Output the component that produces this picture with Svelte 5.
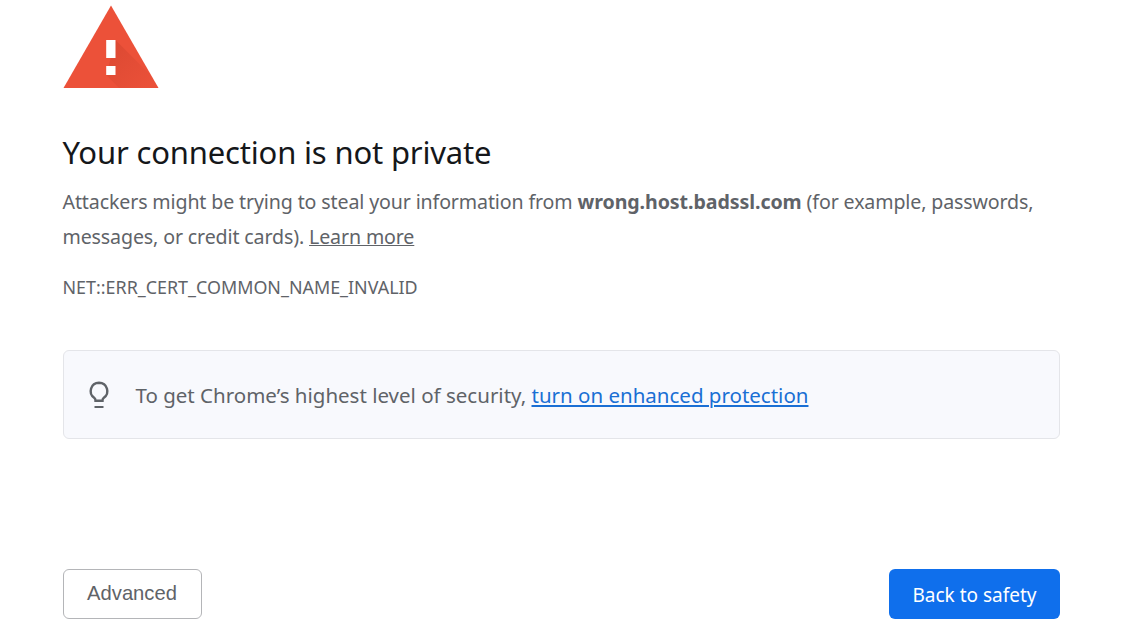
<script>
	const host = 'wrong.host.badssl.com';
	const errorCode = 'NET::ERR_CERT_COMMON_NAME_INVALID';
</script>

<main class="page">
	<svg class="warning" viewBox="0 0 96 84" width="96" height="84" aria-hidden="true">
		<defs>
			<linearGradient id="fold" x1="0.1" y1="0.1" x2="0.9" y2="0.9">
				<stop offset="0" stop-color="#c9402b" stop-opacity="0.45" />
				<stop offset="1" stop-color="#c9402b" stop-opacity="0.04" />
			</linearGradient>
		</defs>
		<polygon points="48,0.5 95.5,83 0.5,83" fill="#ec5139" />
		<polygon points="52.5,35 88.5,71 95.5,83 56,83 43.2,70" fill="url(#fold)" />
		<rect x="43.2" y="35" width="9.3" height="18" fill="#fff" />
		<rect x="43.2" y="61" width="9.3" height="9" fill="#fff" />
	</svg>

	<h1>Your connection is not private</h1>
	<p class="message">
		Attackers might be trying to steal your information from <strong>{host}</strong> (for example, passwords,
		messages, or credit cards). <a href="#learn" class="learn">Learn more</a>
	</p>
	<p class="code">{errorCode}</p>

	<div class="promo">
		<svg class="bulb" viewBox="0 0 24 28" width="24" height="28" aria-hidden="true">
			<path
				d="M12 1.8a8.3 8.3 0 0 0-4.6 15.2c.9.6 1.1 1.4 1.1 2.8h7c0-1.4.2-2.2 1.1-2.8A8.3 8.3 0 0 0 12 1.8Z"
				fill="none"
				stroke="#5f6368"
				stroke-width="2.4"
			/>
			<path d="M7.5 26h9" stroke="#5f6368" stroke-width="2" />
		</svg>
		<span>To get Chrome’s highest level of security, <a href="#protect">turn on enhanced protection</a></span>
	</div>

	<div class="actions">
		<button class="advanced" type="button">Advanced</button>
		<button class="back" type="button">Back to safety</button>
	</div>
</main>

<style>
	:global(body) {
		background: #fff;
	}

	.page {
		box-sizing: border-box;
		width: 1130px;
		height: 636px;
		padding: 5px 70px 0 62.5px;
		display: flex;
		flex-direction: column;
		font-family: 'Noto Sans', 'Open Sans', sans-serif;
		color: #5f6368;
		overflow: hidden;
	}

	.warning {
		display: block;
		flex: none;
	}

	h1 {
		margin: 41px 0 0;
		font-size: 31px;
		line-height: 44px;
		font-weight: 400;
		letter-spacing: -0.17px;
		color: #15171a;
	}

	.message {
		margin: 10px 0 0;
		font-size: 19.6px;
		line-height: 35px;
		letter-spacing: -0.13px;
		width: 990px;
	}

	strong {
		font-weight: 700;
		letter-spacing: -0.08px;
	}

	.learn {
		color: #5f6368;
	}

	.code {
		margin: 17px 0 0;
		font-size: 17.9px;
		line-height: 32px;
	}

	.promo {
		box-sizing: border-box;
		margin-top: 47px;
		height: 89px;
		display: flex;
		align-items: center;
		gap: 25px;
		padding-left: 23px;
		background: #f8f9fd;
		border: 1.5px solid #e4e5e9;
		border-radius: 6px;
		font-size: 20.5px;
	}

	.promo a {
		color: #1a6fd4;
	}

	.bulb {
		flex: none;
	}

	.actions {
		margin-top: 130px;
		display: flex;
		justify-content: space-between;
		align-items: center;
	}

	button {
		box-sizing: border-box;
		height: 50px;
		border-radius: 6px;
		font-size: 20px;
	}

	.advanced {
		width: 139px;
		padding-bottom: 3px;
		background: #fff;
		border: 1.5px solid #b4b5b8;
		color: #5f6368;
		font-family: 'Liberation Sans', Arial, sans-serif;
		font-size: 20.2px;
	}

	.back {
		width: 171px;
		padding-top: 2px;
		background: #0f6fec;
		border: 0;
		color: #fff;
		font-family: 'Noto Sans', sans-serif;
		font-size: 19px;
	}
</style>
